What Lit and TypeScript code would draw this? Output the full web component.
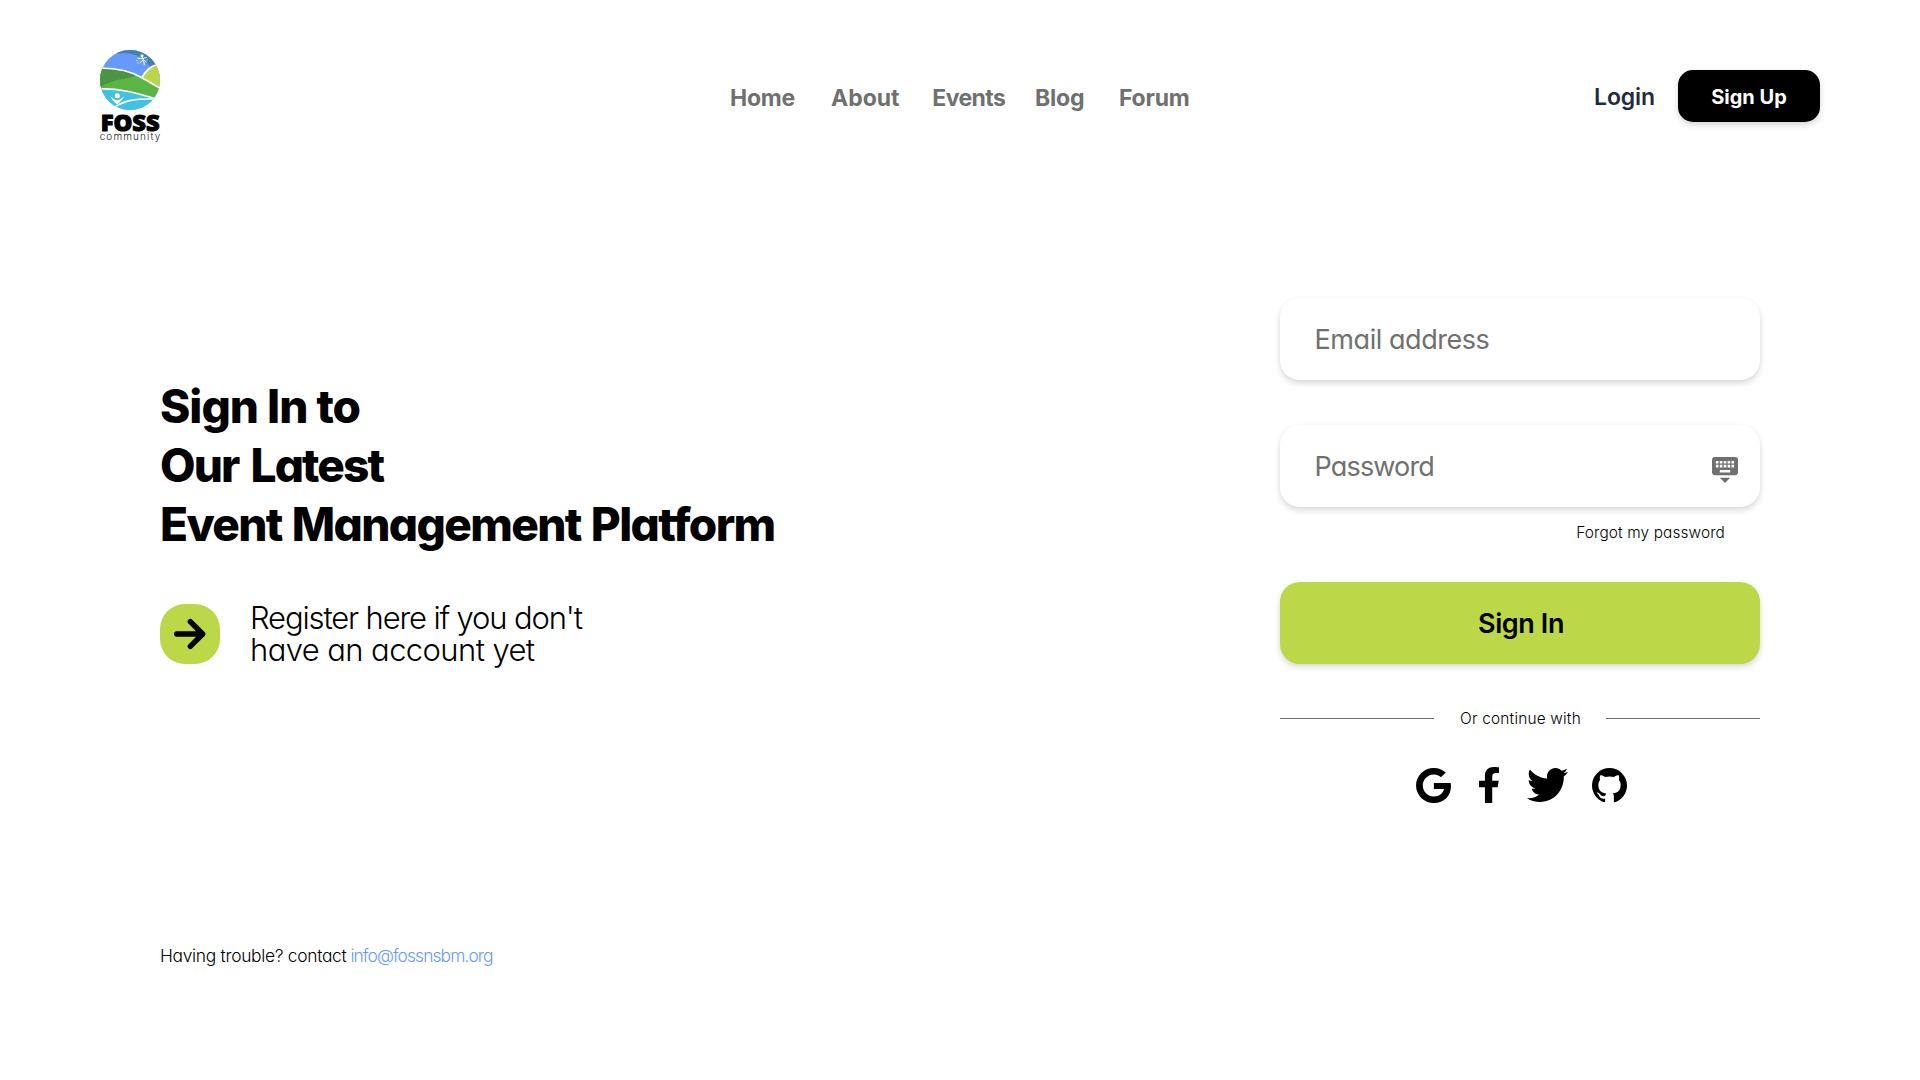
import { LitElement, html, css, svg } from "lit";
import { customElement } from "lit/decorators.js";

const socials = [
  { name: "google", box: "0.3 0 31.4 32", path: "M16.319 13.713v5.487h9.075c-0.369 2.356-2.744 6.9-9.075 6.9-5.463 0-9.919-4.525-9.919-10.1s4.456-10.1 9.919-10.1c3.106 0 5.188 1.325 6.375 2.469l4.344-4.181c-2.788-2.612-6.4-4.188-10.719-4.188-8.844 0-16 7.156-16 16s7.156 16 16 16c9.231 0 15.363-6.494 15.363-15.631 0-1.050-0.113-1.85-0.25-2.65l-15.113-0.006z" },
  { name: "facebook", box: "22.9 0 274.3 512", path: "M279.14 288l14.22-92.66h-88.91v-60.13c0-25.35 12.42-50.06 52.24-50.06h40.42V6.26S260.43 0 225.36 0c-73.22 0-121.08 44.38-121.08 124.72v70.62H22.89V288h81.39v224h100.17V288z" },
  { name: "twitter", box: "0 48 512 416", path: "M459.37 151.716c.325 4.548.325 9.097.325 13.645 0 138.72-105.583 298.558-298.558 298.558-59.452 0-114.68-17.219-161.137-47.106 8.447.974 16.568 1.299 25.34 1.299 49.055 0 94.213-16.568 130.274-44.832-46.132-.975-84.792-31.188-98.112-72.772 6.498.974 12.995 1.624 19.818 1.624 9.421 0 18.843-1.3 27.614-3.573-48.081-9.747-84.143-51.98-84.143-102.985v-1.299c13.969 7.797 30.214 12.67 47.431 13.319-28.264-18.843-46.781-51.005-46.781-87.391 0-19.492 5.197-37.36 14.294-52.954 51.655 63.675 129.3 105.258 216.365 109.807-1.624-7.797-2.599-15.918-2.599-24.04 0-57.828 46.782-104.934 104.934-104.934 30.213 0 57.502 12.67 76.67 33.137 23.715-4.548 46.456-13.32 66.599-25.34-7.798 24.366-24.366 44.833-46.132 57.827 21.117-2.273 41.584-8.122 60.426-16.243-14.292 20.791-32.161 39.308-52.628 54.253z" },
  { name: "github", box: "2 2 20 19.6", path: "M12,2A10,10 0 0,0 2,12C2,16.42 4.87,20.17 8.84,21.5C9.34,21.58 9.5,21.27 9.5,21C9.5,20.77 9.5,20.14 9.5,19.31C6.73,19.91 6.14,17.97 6.14,17.97C5.68,16.81 5.03,16.5 5.03,16.5C4.12,15.88 5.1,15.9 5.1,15.9C6.1,15.97 6.63,16.93 6.63,16.93C7.5,18.45 8.97,18 9.54,17.76C9.63,17.11 9.89,16.67 10.17,16.42C7.95,16.17 5.62,15.31 5.62,11.5C5.62,10.39 6,9.5 6.65,8.79C6.55,8.54 6.2,7.5 6.75,6.15C6.75,6.15 7.59,5.88 9.5,7.17C10.29,6.95 11.15,6.84 12,6.84C12.85,6.84 13.71,6.95 14.5,7.17C16.41,5.88 17.25,6.15 17.25,6.15C17.8,7.5 17.45,8.54 17.35,8.79C18,9.5 18.38,10.39 18.38,11.5C18.38,15.32 16.04,16.16 13.81,16.41C14.17,16.72 14.5,17.33 14.5,18.26C14.5,19.6 14.5,20.68 14.5,21C14.5,21.27 14.66,21.59 15.17,21.5C19.14,20.16 22,16.42 22,12A10,10 0 0,0 12,2Z" },
];

@customElement("foss-logo")
export class FossLogo extends LitElement {
  static styles = css`
    :host { display: block; width: 60px; height: 92px; }
    svg { display: block; overflow: visible; }
    .word { font: 900 67px "Open Sans", Inter, sans-serif; font-weight: 800; stroke: #000; stroke-width: 3px; }
    .sub { font: 300 30px Inter, sans-serif; fill: #222; }
  `;
  render() {
    return html`<svg width="60" height="92" viewBox="60 59 180 276">
      <defs><clipPath id="disc"><circle cx="150" cy="149" r="90" /></clipPath></defs>
      <g clip-path="url(#disc)">
        <rect x="60" y="59" width="180" height="180" fill="#6699fb" />
        <path d="M112 70C150 62 192 76 212 112L245 100V50H112Z" fill="#4181ab" />
        <path d="M186 142C196 122 210 108 245 98V185L186 160Z" fill="#b9d548" />
        <path d="M55 112C110 110 160 126 186 142C206 154 222 164 245 176V220L55 185Z" fill="#5bb545" />
        <path d="M55 112C100 112 135 120 164 134C178 142 110 140 64 168L55 170Z" fill="#4a9443" />
        <path d="M55 176C110 172 160 184 245 212V240H55Z" fill="#40c3e1" />
        <g fill="none" stroke="#fff" stroke-width="5">
          <path d="M55 113C108 113 156 124 186 142C208 155 224 165 245 176" />
          <path d="M186 142C195 124 210 109 232 102" />
          <path d="M55 176C112 172 166 187 240 209" />
        </g>
        <path d="M106 229C134 210 165 205 222 206" fill="none" stroke="#fff" stroke-width="5" />
      </g>
      <circle cx="112" cy="196" r="7.5" fill="#fff" />
      <path d="M91 198Q104 210 112 210Q120 210 133 197Q126 212 117 217L111 222L105 217Q97 211 91 198Z" fill="#fff" />
      <g fill="none" stroke="#fff" stroke-width="3" stroke-linecap="round">
        <path d="M185 76L190 88L180 97M190 88L198 94M173 84L188 84L199 82M193 103L191 92" />
        <path d="M170 91h1M201 89h1M174 98h1" />
      </g>
      <circle cx="186" cy="76" r="4.5" fill="#fff" />
      <text class="word" x="62" y="302" textLength="177" lengthAdjust="spacingAndGlyphs">FOSS</text>
      <text class="sub" x="59" y="328.5" textLength="182">community</text>
    </svg>`;
  }
}

@customElement("app-root")
export class AppRoot extends LitElement {
  static styles = css`
    :host { display: flex; flex-direction: column; box-sizing: border-box; height: 1080px; background: #fff; color: #000;
      font-family: Inter, sans-serif; font-feature-settings: "cv11"; white-space: nowrap; }
    * { box-sizing: border-box; }
    a { color: inherit; text-decoration: none; }
    button { border: 0; font-family: inherit; font-feature-settings: inherit; color: inherit; padding: 0; }
    header { display: flex; align-items: center; height: 192px; padding: 0 100px; }
    nav { display: grid; grid-template-columns: 101px 101.3px 102.7px 84px 72px; margin-left: 570px; padding-top: 3px;
      font-size: 23px; font-weight: 700; color: #707070; }
    .home { letter-spacing: -0.25px; }
    .tight { letter-spacing: -0.6px; }
    .snug { letter-spacing: -0.2px; }
    .actions { display: flex; align-items: center; margin-left: auto; gap: 23px; }
    .login { font-size: 23px; font-weight: 600; color: #1f2d3d; letter-spacing: -0.1px; padding-top: 2px; }
    .signup { width: 142px; height: 52px; border-radius: 15px; background: #000; color: #fff; font-size: 20px; font-weight: 700;
      padding-top: 1px; box-shadow: 0 3px 6px #00000029; }
    main { display: grid; grid-template-columns: 1fr 480px; padding: 0 160px; height: 736px; }
    .intro { padding-top: 184.5px; }
    h1 { margin: 0; font-size: 46px; line-height: 59px; font-weight: 800; }
    h1 span { display: block; }
    .l1 { letter-spacing: -1px; }
    .l2 { letter-spacing: -1.9px; word-spacing: 4px; }
    .l3 { letter-spacing: -1.65px; word-spacing: 1.7px; }
    .register { display: flex; align-items: center; gap: 30px; margin-top: 48.5px; }
    .arrow { width: 60px; height: 60px; border-radius: 25px; background: #bcd747; }
    .arrow svg { display: block; }
    .register p { margin: 0; font-size: 31px; line-height: 32px; font-weight: 300; }
    .register span { display: block; }
    .r1 { letter-spacing: -1.15px; }
    .r2 { letter-spacing: -0.6px; }
    form { padding-top: 106px; }
    .field { display: flex; align-items: center; justify-content: space-between; height: 82px; border-radius: 20px; padding: 0 22px 0 34.6px;
      background: #fff; box-shadow: 0 3px 6px #00000029; color: #707070; font-size: 27px; }
    .field + .field { margin-top: 45px; }
    .field svg { margin-top: 8px; }
    .email { letter-spacing: -0.45px; }
    .password { letter-spacing: -0.85px; }
    .forgot { display: block; margin: 15.5px 35px 0 0; text-align: right; font-size: 15.4px; line-height: 20px; font-weight: 300; letter-spacing: 0.12px; }
    .submit { display: block; width: 480px; height: 82px; margin-top: 39.5px; border-radius: 20px; background: #bcd747;
      font-size: 27px; font-weight: 600; letter-spacing: -0.4px; padding-left: 2px; box-shadow: 0 3px 6px #00000029; }
    .divider { display: flex; align-items: center; justify-content: space-between; margin-top: 44.5px; font-size: 15.4px; line-height: 20px;
      font-weight: 300; letter-spacing: 0.2px; }
    .divider span { padding-left: 1px; }
    .rule { width: 154px; height: 1px; background: #707070; }
    .social { display: flex; align-items: center; margin: 38.5px 0 0 136px; height: 36px; }
    .social svg { display: block; }
    .google { width: 35px; height: 35px; margin-right: 27.5px; }
    .facebook { width: 20px; height: 36px; margin-right: 28.5px; }
    .twitter { width: 41px; height: 34px; margin-right: 24px; }
    .github { width: 35px; height: 34.5px; }
    footer { display: flex; padding-left: 160px; padding-top: 17.5px; font-size: 17.4px; line-height: 20px; font-weight: 300; gap: 4px; }
    .help { letter-spacing: -0.3px; }
    .mail { color: #6699ff; letter-spacing: -0.9px; }
  `;

  render() {
    return html`
      <header>
        <foss-logo></foss-logo>
        <nav>
          <a class="home">Home</a><a>About</a><a class="tight">Events</a><a class="snug">Blog</a><a class="snug">Forum</a>
        </nav>
        <div class="actions">
          <a class="login">Login</a>
          <button class="signup">Sign Up</button>
        </div>
      </header>
      <main>
        <section class="intro">
          <h1><span class="l1">Sign In to</span><span class="l2">Our Latest</span><span class="l3">Event Management Platform</span></h1>
          <div class="register">
            <div class="arrow">
              <svg width="60" height="60" viewBox="0 0 60 60" fill="none" stroke="#000" stroke-width="5.4" stroke-linecap="round" stroke-linejoin="round">
                <path d="M16.7 30H42M30.3 17.7L42.7 30L30.3 42.3" />
              </svg>
            </div>
            <p><span class="r1">Register here if you don't</span><span class="r2">have an account yet</span></p>
          </div>
        </section>
        <form>
          <div class="field"><span class="email">Email address</span></div>
          <div class="field">
            <span class="password">Password</span>
            <svg width="26" height="26" viewBox="2 3 20 20" fill="#707070">
              <path d="M20 3H4c-1.1 0-1.99.9-1.99 2L2 15c0 1.1.9 2 2 2h16c1.1 0 2-.9 2-2V5c0-1.1-.9-2-2-2zm-9 3h2v2h-2V6zm0 3h2v2h-2V9zM8 6h2v2H8V6zm0 3h2v2H8V9zm-1 2H5V9h2v2zm0-3H5V6h2v2zm9 7H8v-2h8v2zm0-4h-2V9h2v2zm0-3h-2V6h2v2zm3 3h-2V9h2v2zm0-3h-2V6h2v2zm-7 15l4-4H8l4 4z" />
            </svg>
          </div>
          <a class="forgot">Forgot my password</a>
          <button class="submit" type="button">Sign In</button>
          <div class="divider"><i class="rule"></i><span>Or continue with</span><i class="rule"></i></div>
          <div class="social">
            ${socials.map((s) => html`<svg class=${s.name} viewBox=${s.box} preserveAspectRatio="none">${svg`<path d=${s.path} />`}</svg>`)}
          </div>
        </form>
      </main>
      <footer><span class="help">Having trouble? contact</span><a class="mail">info@fossnsbm.org</a></footer>
    `;
  }
}
